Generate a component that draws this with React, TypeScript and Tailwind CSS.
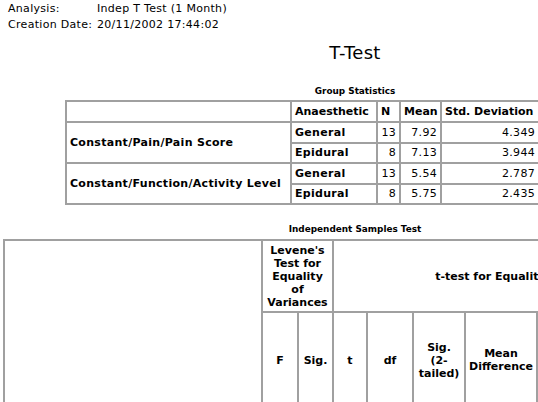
const cell = "border border-[#a0a0a0] px-[3px]";

const groupRows = [
  { variable: "Constant/Pain/Pain Score", group: "General", n: 13, mean: "7.92", sd: "4.349", se: "1.206" },
  { variable: "", group: "Epidural", n: 8, mean: "7.13", sd: "3.944", se: "1.394" },
  { variable: "Constant/Function/Activity Level", group: "General", n: 13, mean: "5.54", sd: "2.787", se: ".773" },
  { variable: "", group: "Epidural", n: 8, mean: "5.75", sd: "2.435", se: ".861" },
];

function GroupStatistics() {
  return (
    <table className="mx-auto w-[580px] table-fixed border-separate border-spacing-0 border border-[#a0a0a0] text-[11px] leading-[13px]">
      <colgroup>
        <col className="w-[225px]" />
        <col className="w-[86px]" />
        <col className="w-[23px]" />
        <col className="w-[41px]" />
        <col className="w-[98px]" />
        <col />
      </colgroup>
      <tbody>
        <tr className="h-[21px] font-bold text-left whitespace-nowrap tracking-normal">
          <td className={cell}></td>
          <td className={cell}>Anaesthetic</td>
          <td className={cell}>N</td>
          <td className={cell}>Mean</td>
          <td className={cell}>Std. Deviation</td>
          <td className={cell}>Std. Error Mean</td>
        </tr>
        {groupRows.map((row, i) => (
          <tr key={i} className="h-[20.5px]">
            {row.variable && (
              <td rowSpan={2} className={`${cell} font-bold whitespace-nowrap`}>
                {row.variable}
              </td>
            )}
            <td className={`${cell} font-bold`}>{row.group}</td>
            <td className={`${cell} text-right`}>{row.n}</td>
            <td className={`${cell} text-right`}>{row.mean}</td>
            <td className={`${cell} text-right`}>{row.sd}</td>
            <td className={`${cell} text-right`}>{row.se}</td>
          </tr>
        ))}
      </tbody>
    </table>
  );
}

function IndependentSamples() {
  const head = `${cell} px-[1px] text-center font-bold whitespace-nowrap`;
  return (
    <table className="ml-[-5px] w-[706px] table-fixed border-separate border-spacing-0 border border-[#a0a0a0] text-[11px] leading-[13px] tracking-normal">
      <colgroup>
        <col className="w-[258px]" />
        <col className="w-[36px]" />
        <col className="w-[35px]" />
        <col className="w-[34px]" />
        <col className="w-[46px]" />
        <col className="w-[52px]" />
        <col className="w-[72px]" />
        <col className="w-[71px]" />
        <col className="w-[50px]" />
        <col />
      </colgroup>
      <tbody>
        <tr className="h-[72px]">
          <td rowSpan={3} className={cell}></td>
          <td colSpan={2} className={head}>
            Levene's
            <br />
            Test for
            <br />
            Equality
            <br />
            of
            <br />
            Variances
          </td>
          <td colSpan={7} className={head}>
            t-test for Equality of Means
          </td>
        </tr>
        <tr className="h-[70px]">
          <td rowSpan={2} className={head}>F</td>
          <td rowSpan={2} className={head}>Sig.</td>
          <td rowSpan={2} className={head}>t</td>
          <td rowSpan={2} className={head}>df</td>
          <td rowSpan={2} className={head}>
            Sig.
            <br />
            (2-
            <br />
            tailed)
          </td>
          <td rowSpan={2} className={head}>
            Mean
            <br />
            Difference
          </td>
          <td rowSpan={2} className={head}>
            Std. Error
            <br />
            Difference
          </td>
          <td colSpan={2} className={head}>
            95%
            <br />
            Confidence
            <br />
            Interval of the
            <br />
            Difference
          </td>
        </tr>
        <tr className="h-[26px]">
          <td className={head}>Lower</td>
          <td className={head}>Upper</td>
        </tr>
      </tbody>
    </table>
  );
}

export default function App() {
  return (
    <div className="w-[538px] h-[402px] overflow-hidden bg-white text-black tracking-[0.3px] font-['DejaVu_Sans',sans-serif]">
      <div className="ml-2 w-[694px]">
        <div className="grid grid-cols-[89px_1fr] pt-[1px] text-[11px] leading-[16px]">
          <span>Analysis:</span>
          <span>Indep T Test (1 Month)</span>
          <span className="whitespace-nowrap">Creation Date:</span>
          <span>20/11/2002 17:44:02</span>
        </div>

        <h1 className="mt-[9px] text-center text-[18px] leading-[22px]">T-Test</h1>

        <div className="mt-[21px] mb-[3px] text-center text-[8.9px] leading-[12px] font-bold tracking-normal">
          Group Statistics
        </div>
        <GroupStatistics />

        <div className="mt-[18px] mb-[4px] text-center text-[8.9px] leading-[12px] font-bold tracking-normal">
          Independent Samples Test
        </div>
        <IndependentSamples />
      </div>
    </div>
  );
}
